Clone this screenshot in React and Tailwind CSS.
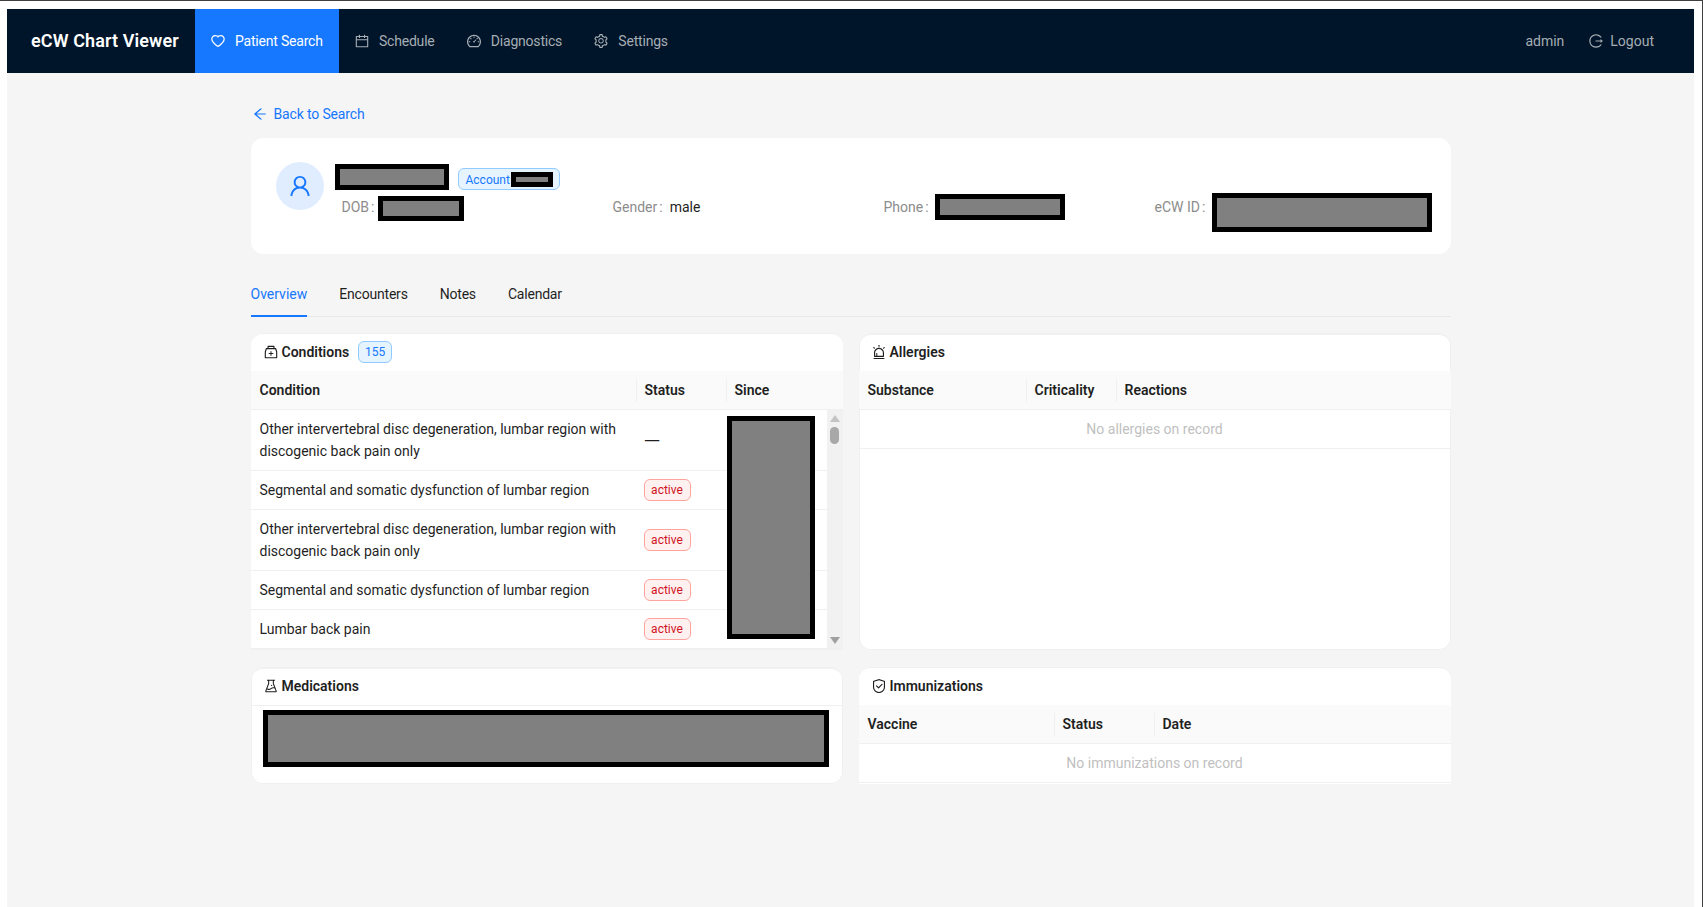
import React from "react";
import {
  AiOutlineAlert,
  AiOutlineArrowLeft,
  AiOutlineCalendar,
  AiOutlineDashboard,
  AiOutlineExperiment,
  AiOutlineHeart,
  AiOutlineLogout,
  AiOutlineMedicineBox,
  AiOutlineSafety,
  AiOutlineSetting,
  AiOutlineUser,
} from "react-icons/ai";

const navItems = [
  { label: "Patient Search", icon: AiOutlineHeart, active: true },
  { label: "Schedule", icon: AiOutlineCalendar },
  { label: "Diagnostics", icon: AiOutlineDashboard },
  { label: "Settings", icon: AiOutlineSetting },
];

const conditions = [
  { name: "Other intervertebral disc degeneration, lumbar region with discogenic back pain only", status: null },
  { name: "Segmental and somatic dysfunction of lumbar region", status: "active" },
  { name: "Other intervertebral disc degeneration, lumbar region with discogenic back pain only", status: "active" },
  { name: "Segmental and somatic dysfunction of lumbar region", status: "active" },
  { name: "Lumbar back pain", status: "active" },
];

const Redacted = ({ className = "" }) => (
  <div className={`shrink-0 border-[5px] border-black bg-[#808080] ${className}`} />
);

const PanelTitle = ({ icon: Icon, title, children }) => (
  <div className="flex h-[37px] items-center pb-[2px] pl-3 text-sm font-semibold text-[#1f1f1f]">
    <Icon className="mr-[3px] text-base" />
    <span>{title}</span>
    {children}
  </div>
);

const TableHead = ({ cols }) => (
  <div className="flex h-[39px] border-b border-[#f0f0f0] bg-[#fafafa] text-sm font-semibold text-[#1f1f1f]">
    {cols.map((col, index) => (
      <div key={col.label} className={`flex items-center ${col.width}`}>
        {index > 0 && <div className="h-[23px] w-px bg-[#f0f0f0]" />}
        <span className={index > 0 ? "pl-2" : "pl-[9px]"}>{col.label}</span>
      </div>
    ))}
  </div>
);

const EmptyRow = ({ text }) => (
  <div className="flex h-[39px] items-center justify-center border-b border-[#f0f0f0] text-sm text-[#bfbfbf]">
    {text}
  </div>
);

const DescItem = ({ label, children }) => (
  <div className="flex items-start text-sm leading-[22px] whitespace-nowrap">
    <span className="text-[#8c8c8c]">
      {label}
      <span className="ml-[2px] mr-[6px]">:</span>
    </span>
    {children}
  </div>
);

export default function App() {
  return (
    <div
      className="flex h-screen flex-col overflow-hidden border-t border-r border-[#404040] bg-white pt-2 pl-[7px] pr-2"
      style={{ fontFamily: '"Roboto", "Liberation Sans", sans-serif' }}
    >
      {/* top nav */}
      <div className="flex h-[64px] shrink-0 items-center bg-[#001529] text-sm">
        <div className="pl-6 pr-4 text-lg font-semibold tracking-[0.1px] whitespace-nowrap text-white">
          eCW Chart Viewer
        </div>
        {navItems.map((item) => {
          const Icon = item.icon;
          return (
            <div
              key={item.label}
              className={`flex h-full items-center gap-[9px] px-4 tracking-[-0.2px] ${
                item.active ? "bg-[#1677ff] text-white" : "text-[#a6adb4]"
              }`}
            >
              <Icon className="-ml-[0.8px] text-base" />
              <span>{item.label}</span>
            </div>
          );
        })}
        <div className="ml-auto flex items-center pr-10 text-[#a6adb4]">
          <span className="mr-6">admin</span>
          <AiOutlineLogout className="mr-[6px] text-base" />
          <span>Logout</span>
        </div>
      </div>

      <div className="flex-1 bg-[#f5f5f5]">
        <div className="mx-auto w-[1200px] pt-[25px]">
          <div className="mb-2 flex h-8 items-center gap-[6px] pl-px text-sm tracking-[-0.15px] text-[#1677ff]">
            <AiOutlineArrowLeft className="text-base" />
            <span>Back to Search</span>
          </div>

          {/* patient card */}
          <div className="flex h-[116px] rounded-xl border border-white bg-white pt-[23px] pr-6 pl-6">
            <div className="flex h-12 w-12 shrink-0 items-center justify-center rounded-full bg-[#e0edff] text-[26px] text-[#1677ff]">
              <AiOutlineUser />
            </div>
            <div className="ml-[11px] flex-1 pt-[2px]">
              <div className="flex items-start">
                <Redacted className="h-[26px] w-[114px]" />
                <div className="mt-1 ml-[9px] flex h-[22px] w-[102px] items-center rounded-md border border-[#91caff] bg-[#e6f4ff] pl-[7px] text-xs text-[#1677ff]">
                  <span className="pt-px">Account</span>
                  <Redacted className="ml-[1px] h-[15px] w-[42px]" />
                </div>
              </div>
              <div className="mt-[6px] grid grid-cols-4 pl-[7px]">
                <DescItem label="DOB">
                  <Redacted className="-ml-[2px] h-[25px] w-[86px]" />
                </DescItem>
                <DescItem label="Gender">
                  <span className="ml-[1px] text-[#1f1f1f]">male</span>
                </DescItem>
                <DescItem label="Phone">
                  <Redacted className="-mt-[2px] h-[26px] w-[130px]" />
                </DescItem>
                <DescItem label="eCW ID">
                  <Redacted className="-mt-[3px] ml-px h-[39px] w-[220px]" />
                </DescItem>
              </div>
            </div>
          </div>

          {/* tabs */}
          <div className="mt-[17px] flex h-[46px] gap-8 border-b border-[#e8e8e8] text-sm tracking-[-0.2px] text-[#1f1f1f]">
            <div className="h-[46px] border-b-2 border-[#1677ff] pt-[13px] tracking-normal text-[#1677ff]">Overview</div>
            <div className="pt-[13px]">Encounters</div>
            <div className="pt-[13px]">Notes</div>
            <div className="pt-[13px]">Calendar</div>
          </div>

          {/* panels */}
          <div className="mt-4 grid grid-cols-2 gap-x-4 gap-y-[17px]">
            <div className="h-[317px] overflow-hidden rounded-t-xl border-t border-[#f0f0f0] bg-white">
              <PanelTitle icon={AiOutlineMedicineBox} title="Conditions">
                <span className="ml-[9px] flex h-[22px] w-[34px] items-center justify-center rounded-md border border-[#91caff] bg-[#e6f4ff] text-xs font-normal text-[#1677ff]">
                  155
                </span>
              </PanelTitle>
              <TableHead
                cols={[
                  { label: "Condition", width: "w-[385px]" },
                  { label: "Status", width: "w-[90px]" },
                  { label: "Since", width: "flex-1" },
                ]}
              />
              <div className="relative flex h-[240px] border-b border-[#f0f0f0]">
                <div className="flex-1 overflow-hidden">
                  {conditions.map((row, index) => (
                    <div key={index} className="flex border-b border-[#f0f0f0] text-sm leading-[22px] text-[#1f1f1f]">
                      <div className="w-[385px] py-2 pr-2 pl-[9px]">{row.name}</div>
                      <div className="flex w-[90px] items-center pl-2">
                        {row.status ? (
                          <span className="flex h-[22px] w-[47px] items-center justify-center rounded-md border border-[#ffa39e] bg-[#fff1f0] text-xs text-[#cf1322]">
                            {row.status}
                          </span>
                        ) : (
                          <span className="pt-[3px] text-[22px] font-light">—</span>
                        )}
                      </div>
                    </div>
                  ))}
                </div>
                {/* scrollbar */}
                <div className="flex w-[16px] flex-col items-center bg-[#f1f1f1] py-[5px]">
                  <div className="h-0 w-0 border-x-[5px] border-b-[7px] border-x-transparent border-b-[#c4c4c4]" />
                  <div className="mt-[5px] h-[17px] w-[9px] rounded-full bg-[#a8a8a8]" />
                  <div className="mt-auto h-0 w-0 border-x-[5px] border-t-[7px] border-x-transparent border-t-[#a0a0a0]" />
                </div>
                <Redacted className="absolute top-[6px] left-[476px] h-[223px] w-[88px]" />
              </div>
            </div>

            <div className="h-[317px] overflow-hidden rounded-xl border-t border-[#f0f0f0] bg-white shadow-[inset_0_0_0_1px_#f0f0f0]">
              <PanelTitle icon={AiOutlineAlert} title="Allergies" />
              <TableHead
                cols={[
                  { label: "Substance", width: "w-[167px]" },
                  { label: "Criticality", width: "w-[90px]" },
                  { label: "Reactions", width: "flex-1" },
                ]}
              />
              <EmptyRow text="No allergies on record" />
            </div>

            <div className="h-[117px] overflow-hidden rounded-xl border-t border-[#f0f0f0] bg-white shadow-[inset_0_0_0_1px_#f0f0f0]">
              <div className="border-b border-[#f0f0f0]">
                <PanelTitle icon={AiOutlineExperiment} title="Medications" />
              </div>
              <div className="px-3 pt-[4px]">
                <Redacted className="h-[57px] w-[566px]" />
              </div>
            </div>

            <div className="overflow-hidden rounded-t-xl border-t border-[#f0f0f0] bg-white">
              <PanelTitle icon={AiOutlineSafety} title="Immunizations" />
              <TableHead
                cols={[
                  { label: "Vaccine", width: "w-[195px]" },
                  { label: "Status", width: "w-[100px]" },
                  { label: "Date", width: "flex-1" },
                ]}
              />
              <EmptyRow text="No immunizations on record" />
            </div>
          </div>
        </div>
      </div>
    </div>
  );
}
